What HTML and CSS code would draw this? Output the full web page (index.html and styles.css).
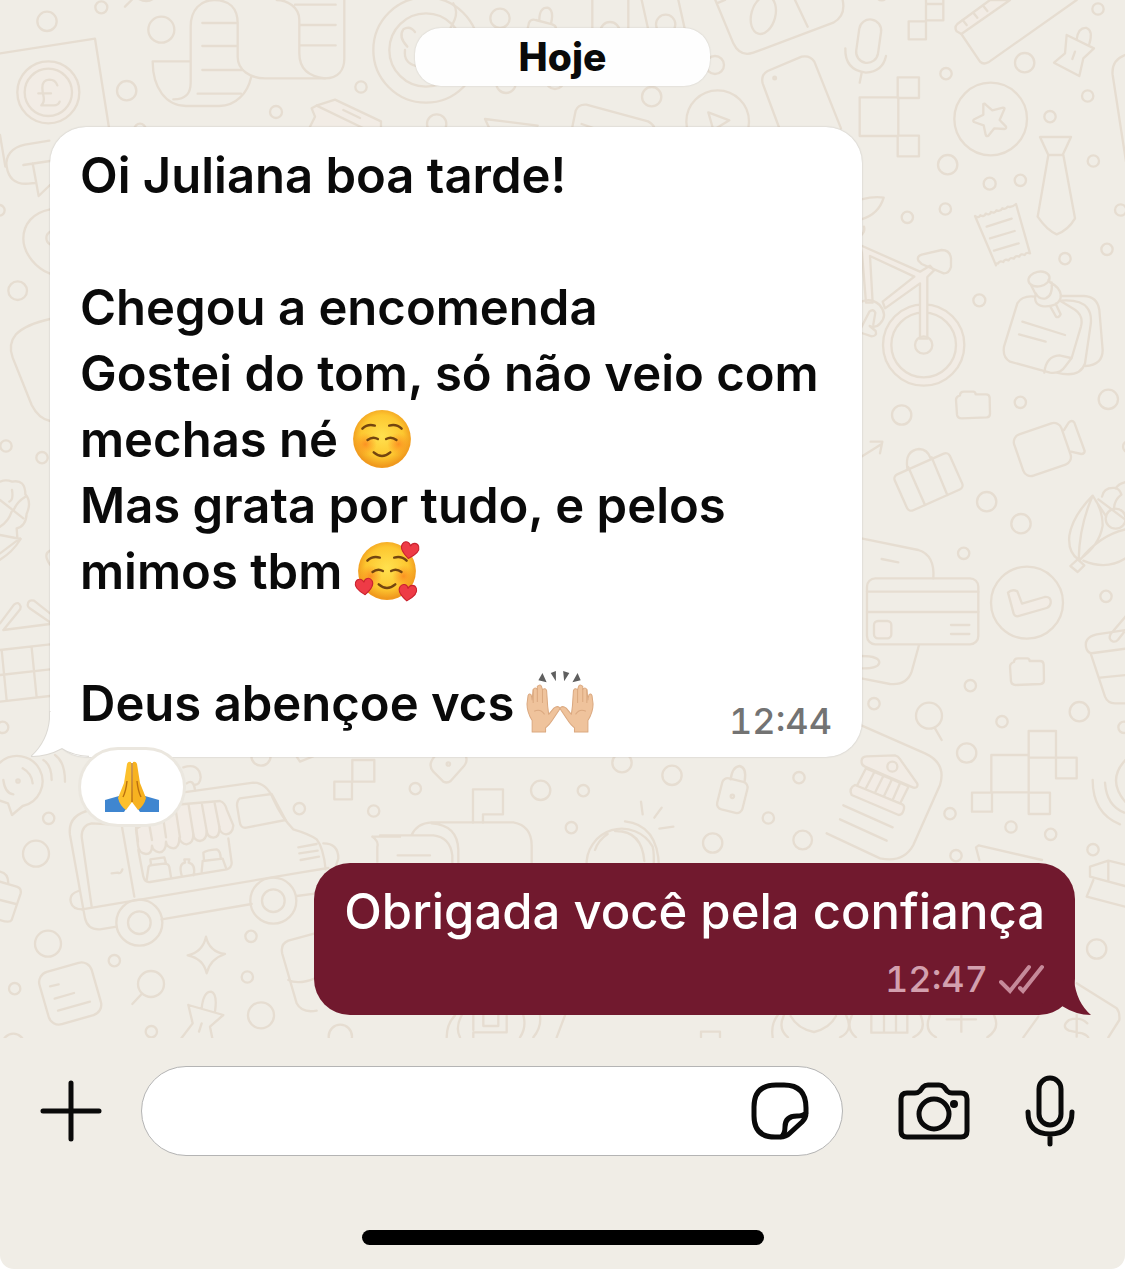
FILE: index.html
```html
<!DOCTYPE html>
<html lang="pt-BR">
<head>
  <meta charset="UTF-8">
  <meta name="viewport" content="width=device-width, initial-scale=1.0">
  <title>Conversa</title>
  <link rel="stylesheet" href="styles.css">
</head>
<body>

  <main class="chat">

    <!-- Wallpaper doodles -->
    <svg class="wallpaper" viewBox="0 0 3375 3114" preserveAspectRatio="xMinYMin slice" aria-hidden="true">
      <!-- Top left: bank note, paper scroll -->
      <g>
        <circle cx="141" cy="64" r="29"/><circle cx="304" cy="22" r="18"/><circle cx="484" cy="89" r="39"/>
        <circle cx="380" cy="272" r="29"/><circle cx="828" cy="336" r="18"/><circle cx="1083" cy="261" r="17"/>
        <circle cx="53" cy="872" r="28"/><circle cx="-2" cy="631" r="16"/><circle cx="420" cy="388" r="17"/>
        <path d="M0 160L285 116L328 390M0 405l16 95M375 20l20-20M415-4q25 14 45 0"/>
        <circle class="tint" cx="145" cy="277" r="93"/><circle cx="145" cy="277" r="71"/>
        <path d="M172 256q-6-17-24-17-21 1-21 24 0 12 4 28 3 15-7 25h38q13 0 17-11M115 280h38"/>
        <path d="M572 184H458c0 80 40 134 100 134h100c50 0 85-40 95-85M520 298c40 0 52-20 52-50V80c0-50 30-80 70-80 45 0 71 24 71 70v100c0 40 37 65 82 65h180c40 0 58-25 58-60V0"/>
        <path d="M975 235c-50-5-77-30-77-75V60C898 20 860 0 830 0M607 69h105M607 138h102M607 210h120M593 281h130M900 75h107M900 136h107M885 14h122"/>
        <circle cx="1278" cy="150" r="158"/><circle cx="1278" cy="150" r="110"/>
        <path d="M1222 140q-28-30-12-52 20-12 35 8M1215 150q-5 40 35 48"/>
        <path class="tint" d="M935 325l14-8 56-18 138 65v26H925l20-40z"/>
        <path d="M950 317l145 70M1030 330l50 24"/>
        <path d="M148 422L75 434c-40 8-60 35-55 65 5 35 25 55 65 52l20-2M70 495l80-12M98 490l18 98 34-33"/>
        <path d="M150 628c-52 10-80 45-80 88 0 45 40 90 80 105M150 695a22 22 0 0 0 0 38"/>
      </g>
      <!-- Left edge: berries, basket -->
      <g transform="translate(0 900)">
        <path d="M150 57q-72 16-102 46-25 30-10 70L95 315q20 40 55 48"/>
        <circle cx="18" cy="438" r="17"/><circle cx="126" cy="473" r="17"/><circle cx="8" cy="1282" r="17"/>
        <path d="M0 545q18-8 36 0 40-8 40 38 20 22 4 58-2 38-30 44M36 570q5 30-8 35M76 590q-25 15-35 40M0 600l70 55M0 680q25-15 35-45M0 705l62 12q-25 40-62 62M0 760l60-45M50 685l2 28M150 752q-22 10 0 42"/>
        <path d="M0 970l42-56q14-12 20 6 0 8-5 12L12 988M150 940l-48-38q-18-5-19 13 0 6 6 10l61 42M10 990l140-18M0 1050l150-17M0 1125l150-17M0 1205l150-17M95 1043l15 150M5 1050l15 152"/>
      </g>
      <!-- Top centre -->
      <g transform="translate(1260 0)">
        <circle cx="240" cy="55" r="29"/><circle cx="695" cy="290" r="29"/><circle cx="50" cy="372" r="29"/>
        <circle cx="258" cy="250" r="29"/><circle cx="405" cy="240" r="27"/><circle cx="570" cy="95" r="29"/>
        <circle cx="737" cy="73" r="29"/><circle cx="885" cy="195" r="27"/><circle cx="893" cy="365" r="94"/>
        <path d="M322 90l5-22q6-12 20-8l50 13q14 5 10 17M358 60q0-38 25-37 20 8 10 48M517 0v90M625 0v90M665 0l20 90M775 0l20 90M195 357l158 20M195 357l14 30M455 390l12-58q8-20 32-18l185 50q20 10 22 30M485 372l40 14M865 337l63 24-48 29zM100 10q20 30-8 72"/>
      </g>
      <!-- Top right: card, microphone, ruler, tie, receipt -->
      <g transform="translate(2100 0)">
        <circle cx="1194" cy="27" r="17"/><circle cx="974" cy="188" r="29"/><circle cx="738" cy="221" r="17"/>
        <circle cx="1163" cy="288" r="17"/><circle cx="1050" cy="350" r="17"/><circle cx="1180" cy="483" r="17"/>
        <circle cx="743" cy="494" r="29"/><circle cx="869" cy="551" r="18"/><circle cx="961" cy="541" r="17"/>
        <circle cx="622" cy="652" r="17"/><circle cx="736" cy="627" r="17"/><circle cx="1262" cy="630" r="17"/>
        <circle cx="1221" cy="748" r="17"/><circle cx="1095" cy="776" r="17"/><circle cx="545" cy="-16" r="17"/>
        <path d="M46 0l54 130q20 42 60 28L400 68q38-20 28-68M50 10l25-10M285 0l38 80"/>
        <ellipse cx="190" cy="45" rx="36" ry="58" transform="rotate(15 190 45)"/>
        <rect x="473" y="58" width="66" height="131" rx="33" transform="rotate(8 506 123)"/>
        <path d="M436 145q-2 66 62 73 50-3 60-50M485 218l-6 30"/>
        <path d="M678 0v118h-52V64h52M678 12h52v49h-52M730 0v12M479 292h116v116H479zM593 232h64v62h-64zM593 407h64v62h-64z"/>
        <path class="tint" d="M870 0l-98 72q-10 10-2 22l14 8L930 0z"/>
        <path d="M784 102l56 83q10 10 25 2L1130 0M788 60l12 15M820 38l12 15M850 18l12 15"/>
        <path d="M1100 105l82 40-32 30-12 53-76-40 33-28zM1130 118q5-37 30-34 20 8 8 48M1125 155l-8 22"/>
        <path d="M240 390L188 250q-6-26 15-37l102-43q25-5 38 15l80 200"/><circle cx="224" cy="234" r="4"/>
        <circle cx="872" cy="357" r="109"/>
        <path d="M850 312q4-3 7 2l20 17 32-8q6 0 4 5l-14 32 19 20q2 7-5 7l-30-2-18 22q-6 4-8-3l-6-28-29-10q-5-4 1-8l27-14z"/>
        <path d="M1020 411h93l-25 54h-43zM1045 465l-32 185q27 40 57 53 35-13 55-48l-35-190"/>
        <path d="M825 648q10 8 16-2 12 6 16-5 12 6 16-5 12 5 16-5 12 5 18-6 10 5 16-5 12 4 25-8l42 148q-12-4-16 5-12-6-16 5-12-5-16 6-12-5-16 5-12-5-16 5-12-5-16 5-10-2-6 5zM860 680l75-24M870 715l74-22M882 752l74-22"/>
        <path d="M484 598q40-10 67-5-15 50-67 65M484 705q12-10 8-25M1278 164q-45 16-40 61l40 260"/>
      </g>
      <!-- Bicycle, sticky notes, video camera, suitcase -->
      <g transform="translate(2550 690)">
        <circle cx="388" cy="211" r="18"/><circle cx="155" cy="555" r="29"/><circle cx="511" cy="517" r="17"/>
        <circle cx="775" cy="508" r="29"/><circle cx="410" cy="815" r="29"/><circle cx="513" cy="881" r="29"/><circle cx="341" cy="970" r="17"/>
        <circle class="tint" cx="221" cy="345" r="122"/><circle class="plain" cx="221" cy="345" r="97"/>
        <path class="tint" d="M30 45l180 80 30-18 12 14-20 20v185h-22V160L105 235l-7-20 95-75L60 78l8 140H48L36 70z"/>
        <circle cx="221" cy="345" r="26"/>
        <path d="M205 92q-5-14 10-18l60-14q25 0 28 25v25q-5 20-22 20l-66-28z"/>
        <path d="M34 215q30-12 55 10 25 30 2 55-12 15-32 8l18 15q5 15-12 16l-30-10M30 300l28-55q12-10 18 3l-6 35"/>
        <path d="M555 200q-38-5-53 20l-40 130q-5 32 18 45l120 33q32 4 45-18l20-26 28-95q8-32-18-50l-42-25M630 212q62-5 82 22 14 18 10 50l-17 116q-15 45-85 28M632 198h70q40 2 46 42l10 120q0 45-52 48"/>
        <path d="M517 275l128 40M507 313l80 22M583 428q5-50 45-52l35 8"/>
        <ellipse cx="567" cy="147" rx="32" ry="22" transform="rotate(-12 567 147)"/>
        <path d="M543 165l14 28q-8 32 24 36 48 2 52-32-2-25-33-40l-4-8M557 190q10 20 30 15 22-8 18-48M600 228l18 32q8 5 14-7l-15-32"/>
        <path id="folder" d="M318 510q0-10 12-14 0-11 12-11h28q6 0 7 8h31q10 0 11 10l1 48q0 10-10 11l-75 3q-12 0-14-11z"/>
        <rect x="502" y="593" width="150" height="131" rx="24" transform="rotate(-19 577 658)"/>
        <path d="M642 600l14-22q10-10 17 0l31 85q0 9-10 9l-31-7"/>
        <rect x="145" y="697" width="181" height="118" rx="14" transform="rotate(-24 235 756)"/>
        <path d="M172 715q-8-53 35-58 25 0 35 28M175 712l50 113M245 682l47 113M34 680l61-38M62 635h35l-7 35"/>
        <path d="M728 797q-60 60-70 120-5 50 28 72M728 797q-40 90-42 192M728 797q30 40 30 90-10 60-70 102M737 812l30 45M745 808l80 60M690 990q60-75 138-92M700 992q70 30 128-8"/>
        <path d="M756 800q5-30 42-26 12 5 16 20M798 776q5-15 30-20M814 794q-20 15-22 40"/>
        <circle cx="797" cy="866" r="30"/><circle cx="836" cy="650" r="17"/>
        <path d="M683 988l20 18-20 20-22-18z"/>
      </g>
      <!-- Credit cards, tick badge, bank letter -->
      <g transform="translate(2550 1560)">
        <circle cx="768" cy="229" r="17"/><circle cx="361" cy="497" r="17"/><circle cx="72" cy="551" r="17"/>
        <circle cx="237" cy="587" r="39"/><circle cx="456" cy="605" r="17"/><circle cx="688" cy="575" r="29"/>
        <circle cx="350" cy="699" r="29"/><circle cx="822" cy="622" r="17"/><circle cx="300" cy="881" r="17"/>
        <circle cx="483" cy="921" r="17"/><circle cx="602" cy="943" r="17"/><circle cx="729" cy="989" r="17"/><circle cx="318" cy="1007" r="17"/>
        <path d="M34 55l171 35q50 15 45 85M95 117l50 10M51 215h334M51 276h334M303 315h55M303 342h55"/>
        <rect x="51" y="175" width="334" height="198" rx="25"/>
        <rect class="tint" x="72" y="303" width="52" height="52" rx="12"/>
        <path d="M207 375l-22 80q-15 42-65 37l-86-17M34 408q54 0 54 20-4 18-54 17"/>
        <circle cx="531" cy="248" r="108"/>
        <path class="tint" d="M474 218q12-12 28-4l14 37 68-20q20-2 18 18-2 12-12 15l-88 25q-8 0-11-8z"/>
        <use href="#folder" x="162" y="-70"/>
        <path d="M255 625l20 35"/>
        <path d="M828 330l-88 13q-42 10-30 45 6 14 20 11l98-13M722 400l43 130q8 20 30 20h33M750 473l78-8M828 288l-46 54q-8 16 6 22 9 3 16-5l24-30"/>
        <path d="M34 616l191 84q65 30 45 95l-80 180q-30 55-100 40L-70 940"/>
        <path class="tint" d="M48 745l-28 54 130 52 26-52z"/>
        <path class="tint" d="M35 722q0-12 15-13l85-3q10 2 14 10l53 75q3 14-12 12L45 740q-12-5-10-18z"/><circle cx="127" cy="740" r="15"/>
        <path d="M72 758l-24 46M100 768l-24 48M125 780l-23 48M150 790l-22 50"/>
        <path class="tint" d="M15 795l142 58q8 5 4 17-4 15-15 15L5 825q-10-20 10-30z"/>
        <path d="M-20 856L128 922M-30 898L110 962"/>
        <path d="M424 705h112v112H424zM536 633h82v80h-82zM618 713h62v62h-62zM366 818h60v57h-60zM536 818h64v64h-64z"/>
        <path d="M728 780q0 100 82 133M765 788q5 70 58 90M828 718q-60 62 0 130M388 1020l-10-38 8-6 190 44"/>
      </g>
      <!-- Food truck and neighbours -->
      <g transform="translate(0 2190)">
        <circle cx="146" cy="265" r="17"/><circle cx="108" cy="371" r="39"/><circle cx="144" cy="641" r="39"/>
        <circle cx="343" cy="692" r="17"/><circle cx="44" cy="776" r="17"/><circle cx="453" cy="762" r="39"/>
        <circle cx="753" cy="619" r="17"/><circle cx="742" cy="741" r="17"/><circle cx="783" cy="856" r="39"/>
        <circle cx="454" cy="905" r="17"/><circle cx="898" cy="236" r="17"/><circle cx="1121" cy="243" r="17"/>
        <circle cx="783" cy="78" r="29"/><circle cx="40" cy="944" r="33"/><circle cx="1021" cy="919" r="35"/>
        <path d="M0 98a76 76 0 1 1 68 130l-32 27-12-35-24-8M10 150q5 40 30 43M68 115q27 15 30 45M130 90q25 15 25 60M165 75q30 20 30 80"/><circle cx="54" cy="153" r="5"/>
        <path d="M425 792l-28 30M618 620q10 45 57 52-45 15-55 58-10-45-57-54 45-10 55-56z"/>
        <rect x="129" y="709" width="163" height="163" rx="32" transform="rotate(-16 210 790)"/>
        <path d="M150 769l26-6M164 806l58-17M174 842l96-27"/>
        <path d="M550 187l210-29q40 0 60 50 25 55 60 90 50 15 70 30 20 25 27 90M272 240q-70 15-62 75l45 250q8 35 45 33l50-8M246 538L900 428l85-14M485 568l270-46M890 498l60-8"/>
        <path d="M275 530l-30-210q0-35 30-40l90 5 38 215M335 430l18-2q10 5 14-10M235 483q-30 10-22 35 5 20 35 20M720 205l95-13 42 78-118 23q-18 2-20-18l-8-48q0-16 9-22z"/>
        <path class="tint" d="M520 225l140-12q15 5 20 25l20 48q-2 25-22 27-18-2-20-22 2 30-18 32-18-2-20-20 0 28-20 30-18-2-20-20 0 28-20 30-18-2-22-20 0 30-18 32-20-2-22-20 0 30-20 32-20-4-22-20 0 25-18 25-22-2-24-25l-6-50z"/>
        <path d="M658 290l-14-70M620 302l-14-78M580 312l-14-86M540 322l-14-90M498 322l-8-55M456 330l-8-45M414 335l-6-45"/>
        <path d="M415 360l15 80q5 18 20 16l230-38q15-5 15-20l-10-73M440 450l5-35q0-10 12-10l35-4q14 0 16 10l5 30M453 404l-2-16 42-6 5 18M545 436q-10-35 10-38l-2-10h15l-2 10q22 5 15 38M605 425l3-32 60-7 10 28M612 390l-2-22q10-8 40-10 12 5 12 27"/>
        <circle cx="418" cy="578" r="69"/><circle cx="418" cy="578" r="34"/><circle cx="820" cy="512" r="69"/><circle cx="820" cy="512" r="34"/>
        <path d="M895 352l55-10M898 370l55-8M902 390l55-10M970 340q45 0 45 45l-8 25M550 112q48-14 52 30-2 25-20 22M560 160q20-15 25 20"/>
        <path d="M565 825l105 30-40 35 8 40M565 825l13 55-38 50M605 835q5-50 28-50 20 5 12 60M605 880l-8 25"/>
        <path d="M0 425q25 5 25 35M0 455l50 15q15 5 12 20l-27 80q-5 10-35 0M0 510l48 12M945 610l-80 22q-25 10-18 40l43 148q15 30 60 22M865 750q30 15 80-5"/>
        <path d="M1057 90h66v65h-66zM1003 155h53v53h-53zM890 80l10 15 50-20M1117 320h83M1117 320q20 15 15 30v45"/>
      </g>
      <!-- Mailbox, ring, padlocks -->
      <g transform="translate(1140 2220)">
        <circle cx="106" cy="146" r="17"/><circle cx="482" cy="151" r="29"/><circle cx="610" cy="152" r="17"/>
        <circle cx="574" cy="263" r="17"/><circle cx="726" cy="68" r="29"/><circle cx="876" cy="106" r="29"/>
        <circle cx="1165" cy="234" r="17"/><circle cx="998" cy="309" r="29"/><circle cx="1257" cy="113" r="17"/><circle cx="1268" cy="300" r="28"/>
        <path d="M168 45q-28 28-8 50l30 30q12 6 22-2l40-45q12-15 5-30M279 248V148h90v75h-60v25M95 285q15-35 60-38h245q55 10 55 70v60M155 250q78 5 80 80v50M0 286h160q50 5 57 60v30M53 346h97"/><circle cx="205" cy="72" r="5"/>
        <path d="M620 380a106 106 0 0 1 198-60q5 20 3 60M735 244q98 10 102 136M645 330q10-30 38-48M705 273q80-2 88 90M783 185l5 38M845 203l-22 30M838 266l42-6"/>
        <rect x="1018" y="119" width="78" height="96" rx="17" transform="rotate(14 1057 167)"/><circle cx="1057" cy="169" r="5"/>
        <path d="M1052 118q5-38 27-40 22 5 15 45"/>
      </g>
      <!-- Bottom right strip -->
      <g transform="translate(2100 2790)">
        <circle cx="1190" cy="57" r="29"/>
        <path d="M218 322q-6-40 15-66M264 322q-32-26-12-66M272 258q20 38 70 48 48-12 66-48M420 322q42-20 18-66M468 322q-32-26-12-66M514 256v52h108v-52M552 256v52M588 256v52M640 322q42-20 22-66M708 322q-38-20-18-66M740 268h88M784 255v50M862 322q40-26 20-66M970 322l45-62M1130 160l120 75q10 12 8 35l-33 52M1162 280q-22-22-55-10-25 20 0 32l40 8q30 12 10 24M1130 255v65M3 322v-17h57v17"/>
        <path d="M-760 322q0-40 25-66M-720 322q-15-30 5-66M-680 300v-44M-680 322v-15h100v-50M-650 256v32h45v-32M-540 322q20-30 10-66M-430 322l25-66M-500 322q25-30 20-66"/>
        <path d="M1170-190l55-18 50 12M1170-190v30l105 28M1225-208v60M1180-150l-20 50 115 30"/>
      </g>
    </svg>

    <time class="day">Hoje</time>

    <article class="message message-in">
      <svg class="tail tail-in" viewBox="0 0 60 46" aria-hidden="true">
        <path class="tail-line" d="M19 0V8Q17 30 1 45Q16 45 31 37Q41 44 58 45"/>
        <path d="M19 0V8Q17 30 1 45Q16 45 31 37Q41 44 60 45z"/>
      </svg>
      <p>Oi Juliana boa tarde!</p>
      <p>
        Chegou a encomenda<br>
        Gostei do tom, só não veio com mechas né
        <svg class="emoji" viewBox="0 0 62 62" role="img" aria-label="☺️">
          <defs>
            <radialGradient id="face" cx="50%" cy="45%" r="52%">
              <stop offset="0" stop-color="#ffe14f"/>
              <stop offset="0.7" stop-color="#fdc730"/>
              <stop offset="1" stop-color="#f0991d"/>
            </radialGradient>
            <radialGradient id="blush">
              <stop offset="0" stop-color="#fb7a1c" stop-opacity="0.7"/>
              <stop offset="1" stop-color="#fb8a1c" stop-opacity="0"/>
            </radialGradient>
            <g id="smile">
              <circle cx="31" cy="31" r="28" fill="url(#face)"/>
              <circle cx="15" cy="36" r="11" fill="url(#blush)"/>
              <circle cx="47" cy="36" r="11" fill="url(#blush)"/>
              <path d="M12 21q5-5 12-3M38 18q7-2 12 3M17 32q5-4 10-1M35 31q5-3 10 1M23 44q8 7 16 0" fill="none" stroke="#74450f" stroke-width="2.4" stroke-linecap="round"/>
            </g>
          </defs>
          <use href="#smile"/>
        </svg><br>
        Mas grata por tudo, e pelos mimos tbm
        <svg class="emoji" viewBox="0 0 62 62" role="img" aria-label="🥰">
          <defs>
            <path id="heart" d="M0 8C-7 3-10-1-8-5-6-9-1-8 0-4 1-8 6-9 8-5 10-1 7 3 0 8z"/>
          </defs>
          <use href="#smile"/>
          <g fill="#ee3b46" stroke="#c9222f">
            <use href="#heart" transform="translate(53 11) rotate(10)"/>
            <use href="#heart" transform="translate(9 46) rotate(-6)"/>
            <use href="#heart" transform="translate(51 52) rotate(6)"/>
          </g>
        </svg>
      </p>
      <div class="last-line">
        <p>
          Deus abençoe vcs
          <svg class="emoji" viewBox="0 0 62 62" role="img" aria-label="🙌🏼">
            <g fill="#5f5f5f">
              <path d="M15 2l4 9-8-2zM28 0l0 10-5-8zM35 0l6 2-5 8zM49 2l3 7-8 2z"/>
            </g>
            <g id="hand" fill="#efc39c" stroke="#dba980" stroke-linejoin="round">
              <path d="M5 59V48Q0 40 0 32l1-8q1-3 3-1l1 5 1-10q2-3 4 0v-3q3-3 4 0l1 3q3-2 4 1l1 15 1 8 5-6q4-3 6 0l-1 2-6 9q-4 6-7 8v4z"/>
              <path d="M6 18v13M10 17v13M15 18v13M7 39q6-3 10 3" fill="none"/>
            </g>
            <use href="#hand" transform="translate(64 0) scale(-1 1)"/>
          </svg>
        </p>
        <time class="time">12:44</time>
      </div>
    </article>

    <button class="reaction" type="button" aria-label="Reação 🙏">
      <svg viewBox="0 0 54 52" aria-hidden="true">
        <path d="M0 39L14 35 21 48 19 51H0zM54 39L40 35 33 48 35 51H54z" fill="#3f86d0"/>
        <path d="M26 1q-3-1-4 2l-3 19-6 15q2 8 8 12l6-8z" fill="#fcc02c"/>
        <path d="M28 1q3-1 4 2l3 19 6 15q-2 8-8 12l-6-8z" fill="#f7b220"/>
        <path d="M27 2v39M22 20q-1 10-4 16M32 20q1 10 4 16" fill="none" stroke="#bb700f" stroke-width="1.4"/>
      </svg>
    </button>

    <article class="message message-out">
      <svg class="tail tail-out" viewBox="0 0 60 46" aria-hidden="true">
        <path d="M42 0V10Q44 33 59 46Q44 46 30 37Q20 45 0 46z"/>
      </svg>
      <p>Obrigada você pela confiança</p>
      <div class="status">
        <time class="time">12:47</time>
        <svg class="ticks" viewBox="0 0 46 32" role="img" aria-label="Entregue">
          <path d="M2 19l9 9L30 4M21 25l3 3L43 4"/>
        </svg>
      </div>
    </article>

  </main>

  <footer class="composer">
    <form class="composer-row">
      <button class="icon-button add" type="button" aria-label="Anexar">
        <svg viewBox="0 0 62 62"><path d="M31 3v56M3 31h56"/></svg>
      </button>
      <div class="field">
        <input type="text" aria-label="Mensagem">
        <button class="icon-button sticker" type="button" aria-label="Figurinhas">
          <svg viewBox="0 0 58 58"><path d="M55 31V26Q55 3 33 3H25Q3 3 3 25V34Q3 55 24 55H29Q35 55 39 51L51 40Q55 36 55 31zM55 31Q52 34 46 34Q34 34 34 45Q34 52 30 55"/></svg>
        </button>
      </div>
      <button class="icon-button camera" type="button" aria-label="Câmera">
        <svg viewBox="0 0 72 58">
          <path d="M9 11H17Q20 11 22 9L25 5Q27 3 30 3H41Q44 3 46 5L49 9Q51 11 54 11H63Q69 11 69 17V49Q69 55 63 55H9Q3 55 3 49V17Q3 11 9 11z"/>
          <circle cx="36" cy="32" r="15"/>
          <circle class="dot" cx="56" cy="22" r="4"/>
        </svg>
      </button>
      <button class="icon-button mic" type="button" aria-label="Gravar áudio">
        <svg viewBox="0 0 50 72">
          <rect x="14" y="3" width="22" height="47" rx="11"/>
          <path d="M3 37Q3 59 25 59T47 37M25 59V69"/>
        </svg>
      </button>
    </form>
    <div class="home-bar"></div>
  </footer>

</body>
</html>
```
FILE: styles.css
```css
* {
  box-sizing: border-box;
}

body {
  margin: 0;
  min-height: 100vh;
  display: flex;
  flex-direction: column;
  font-family: Inter, "Liberation Sans", sans-serif;
  background-color: #fff;
  color: #0a0a0a;
}

p {
  margin: 0;
}

/* Conversation */
.chat {
  position: relative;
  flex: 1;
  display: flex;
  flex-direction: column;
  align-items: flex-start;
  padding: 28px 50px 23px;
  background-color: #f0ede6;
  overflow: hidden;
}

.wallpaper {
  position: absolute;
  top: 0;
  left: 0;
  width: 100%;
  height: 100%;
  fill: none;
  stroke: #e6ddd1;
  stroke-width: 7;
  stroke-linecap: round;
  stroke-linejoin: round;
}

.tint {
  fill: #f2ece5;
}

.plain {
  fill: #f0ede6;
}

.day {
  position: relative;
  align-self: center;
  padding: 0 104px;
  margin-bottom: 41px;
  border-radius: 26px;
  background-color: #fefefe;
  box-shadow: 0 0 2px rgba(0, 0, 0, 0.15);
  font-size: 39px;
  font-weight: 800;
  line-height: 58px;
}

.message {
  position: relative;
  padding: 16px 30px 20px;
  border-radius: 36px;
  font-size: 49px;
  line-height: 66px;
}

.message-in {
  max-width: 812px;
  background-color: #fff;
  box-shadow: 0 0 2px rgba(0, 0, 0, 0.2);
  font-weight: 600;
}

.message-in > p {
  margin-bottom: 66px;
}

.message-out {
  align-self: flex-end;
  background-color: #71192e;
  color: #fff;
  font-weight: 500;
}

.last-line {
  display: flex;
  justify-content: space-between;
  align-items: flex-end;
}

.emoji {
  width: 64px;
  height: 64px;
  margin: -8px 0;
  vertical-align: -6px;
  overflow: visible;
}

.time {
  font-size: 36px;
  font-weight: 500;
  font-variant-numeric: tabular-nums;
  line-height: 32px;
  color: #737373;
}

.status {
  display: flex;
  justify-content: flex-end;
  gap: 11px;
  margin-top: 18px;
}

.status .time {
  color: #d3a0ae;
}

.ticks {
  width: 46px;
  height: 32px;
  fill: none;
  stroke: #c68a9a;
  stroke-width: 4;
  stroke-linecap: round;
}

/* Bubble tails */
.tail {
  position: absolute;
  bottom: 0;
  width: 60px;
  height: 46px;
}

.tail-in {
  left: -19px;
  fill: #fff;
}

.tail-line {
  fill: none;
  stroke: #dcd9d3;
  stroke-width: 2;
}

.tail-out {
  right: -17px;
  fill: #71192e;
}

.reaction {
  position: relative;
  display: flex;
  align-items: center;
  justify-content: center;
  width: 108px;
  height: 80px;
  margin: -10px 0 36px 28px;
  padding: 0;
  border: 3px solid #ebe7df;
  border-radius: 40px;
  background-color: #fff;
}

.reaction svg {
  width: 54px;
  height: 52px;
}

/* Message composer */
.composer {
  padding: 28px 50px 24px 40px;
  border-radius: 0 0 14px 14px;
  background-color: #f0ede6;
}

.composer-row {
  display: flex;
  align-items: center;
}

.icon-button {
  flex: none;
  padding: 0;
  border: 0;
  background: none;
}

.icon-button svg {
  display: block;
  width: 100%;
  fill: none;
  stroke: #0a0a0a;
  stroke-width: 5;
  stroke-linecap: round;
  stroke-linejoin: round;
}

.icon-button .dot {
  fill: #0a0a0a;
  stroke: none;
}

.add {
  width: 62px;
}

.field {
  flex: 1;
  display: flex;
  align-items: center;
  min-width: 0;
  height: 90px;
  margin: 0 55px 0 39px;
  padding: 0 33px;
  border: 1px solid #b4b4b4;
  border-radius: 45px;
  background-color: #fff;
}

.field input {
  flex: 1;
  min-width: 0;
  border: 0;
  outline: 0;
  background: none;
  font: inherit;
  font-size: 49px;
}

.sticker {
  width: 58px;
}

.camera {
  width: 72px;
  margin-right: 55px;
}

.mic {
  width: 50px;
}

.home-bar {
  width: 402px;
  height: 15px;
  margin: 74px auto 0;
  border-radius: 8px;
  background-color: #000;
  /* evens out the uneven side padding */
  position: relative;
  left: 5px;
}
```
